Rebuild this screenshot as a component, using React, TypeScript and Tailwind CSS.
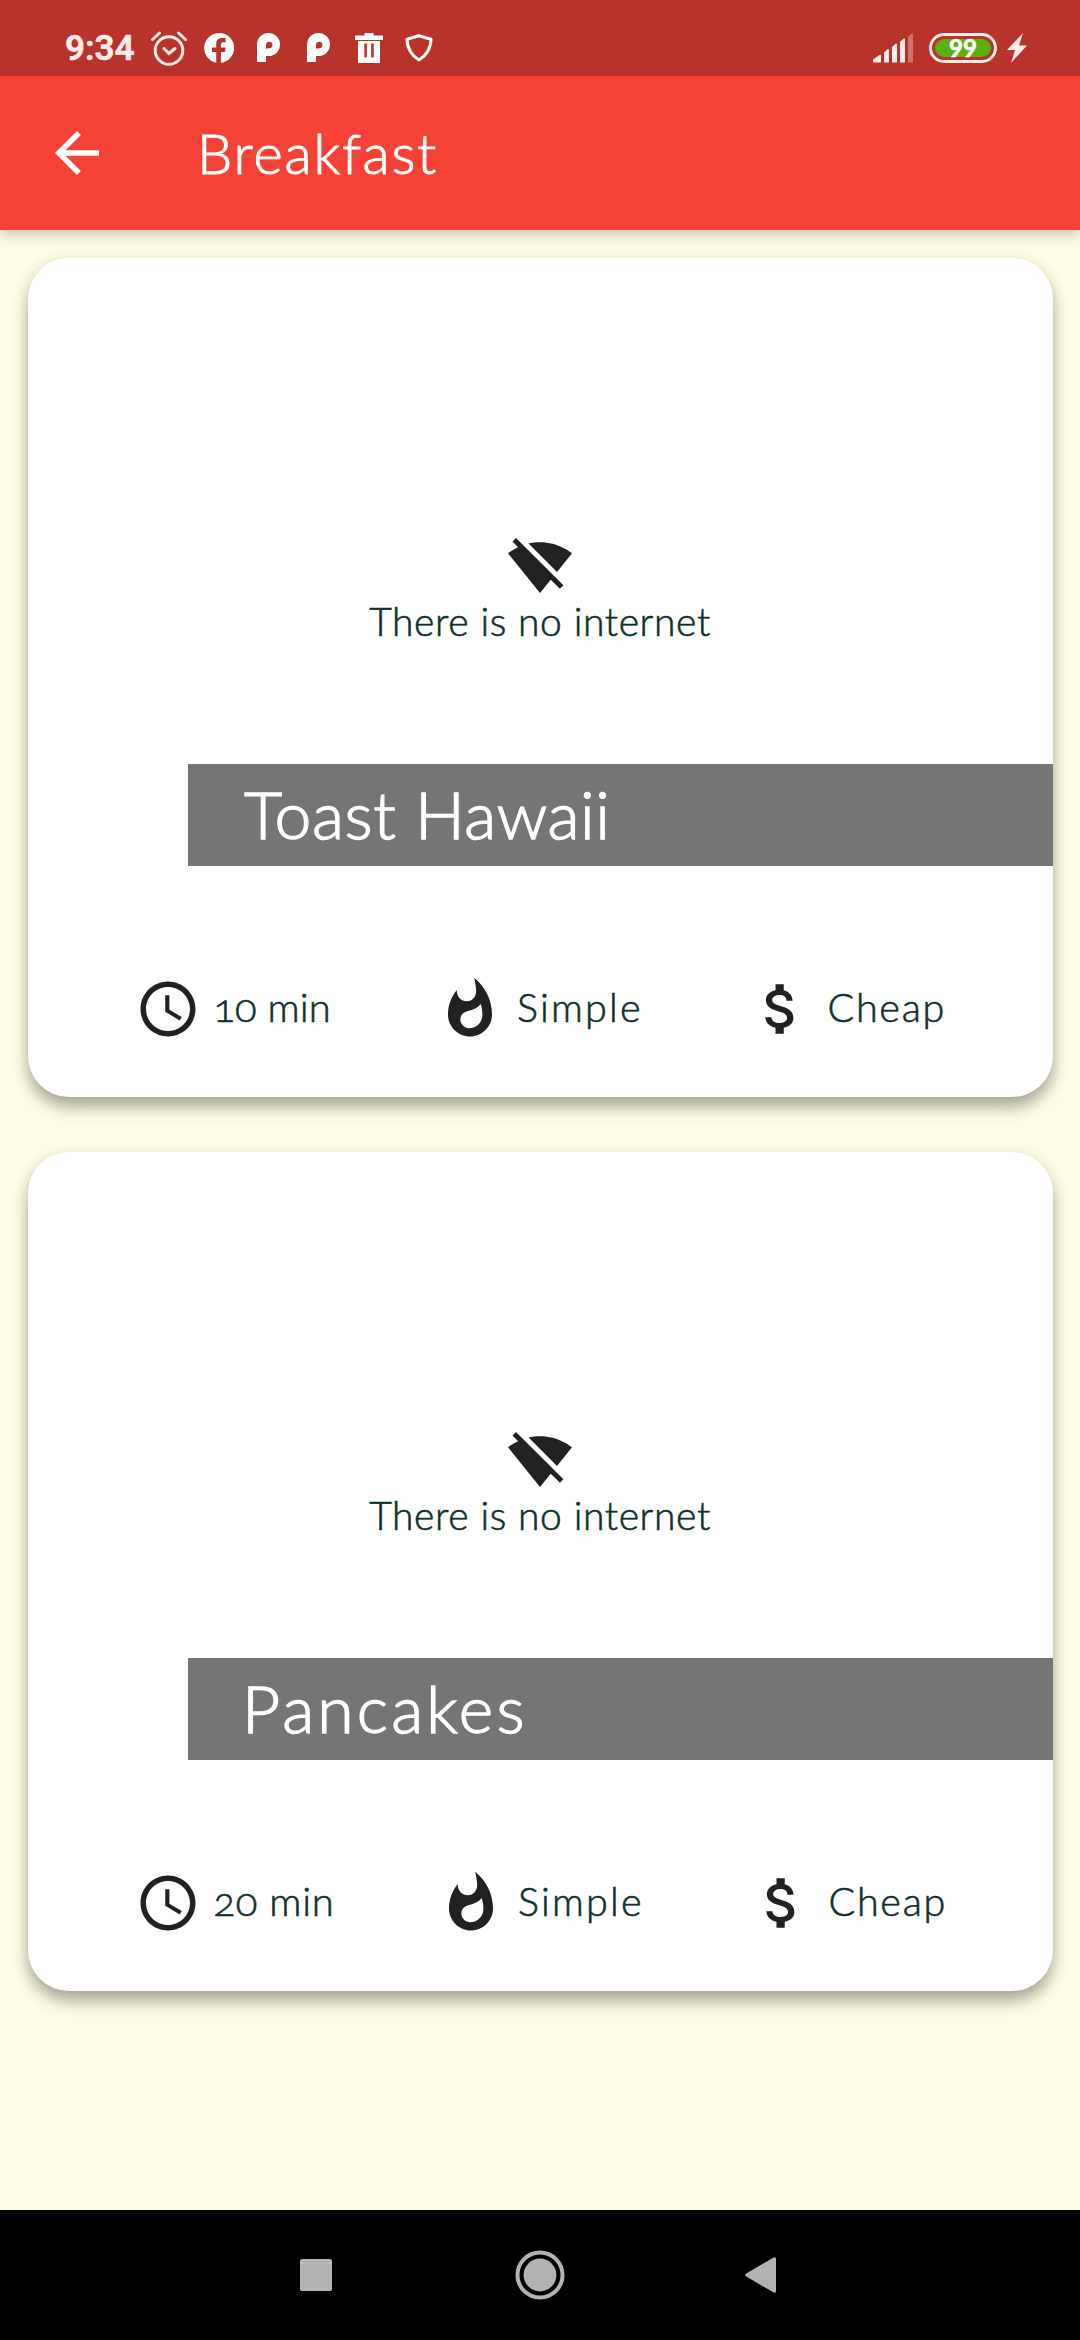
import type { ReactNode } from 'react';

type Recipe = {
  title: string;
  titleClass: string;
  duration: string;
  durationClass: string;
  durationWidth: string;
};

const recipes: Recipe[] = [
  {
    title: 'Toast Hawaii',
    titleClass: 'text-[66px] tracking-[0.6px] pl-[56px]',
    duration: '10 min',
    durationClass: 'tracking-[0px]',
    durationWidth: 'w-[302px]',
  },
  {
    title: 'Pancakes',
    titleClass: 'text-[66px] tracking-[3.2px] pl-[54px]',
    duration: '20 min',
    durationClass: 'tracking-[0.6px]',
    durationWidth: 'w-[303px]',
  },
];

function AlarmIcon() {
  return (
    <svg className="ml-[16px] h-[36px] w-[38px]" viewBox="0 0 38 36" fill="none" stroke="currentColor" strokeWidth="3" strokeLinecap="round">
      <circle cx="19" cy="20.5" r="13.8" />
      <path d="M2.5 9.5 9.5 3M28.500 3l7 6.500M14 18.500l5 5 6-5" />
    </svg>
  );
}

function FacebookIcon() {
  return (
    <svg className="ml-[16px] h-[30px] w-[30px]" viewBox="0 0 30 30" fill="currentColor">
      <path d="M15 0a15 15 0 0 0-2.800 29.700V19H8v-4.600h4.200v-3.200c0-4 2.300-6.200 5.900-6.200h3.600v4.300h-2.400c-1.800 0-2.400 1-2.400 2.300v2.800h4.700L21 19h-4.100v10.900A15 15 0 0 0 15 0z" />
    </svg>
  );
}

function PIcon({ className }: { className: string }) {
  return (
    <svg className={className} viewBox="0 0 23 29" fill="currentColor" fillRule="evenodd">
      <path d="M0 29V11.500a11.500 11.500 0 1 1 11.500 11.500H9v6zM9 17V12a3.200 3.200 0 1 1 3.200 3.200H11.500c-1.500 0-2.500.6-2.500 1.800z" />
    </svg>
  );
}

function TrashIcon() {
  return (
    <svg className="ml-[25px] h-[30px] w-[28px]" viewBox="0 0 28 30" fill="currentColor" fillRule="evenodd">
      <path d="M0 2.500h9.500V0h9v2.500H28V7H0zM3 8h22v22H3zm6.300 2.500v14h2.600v-14zm6.800 0v14h2.600v-14z" />
    </svg>
  );
}

function ShieldIcon() {
  return (
    <svg className="ml-[22px] h-[28px] w-[28px]" viewBox="0 0 28 28" fill="none" stroke="currentColor" strokeWidth="3" strokeLinejoin="round">
      <path d="M14 1.800 26 5.200C26 14 21 22 14 26 7 22 2 14 2 5.200z" />
    </svg>
  );
}

function SignalIcon() {
  return (
    <svg className="h-[30px] w-[41px]" viewBox="0 0 41 30" fill="currentColor">
      <path d="M0 29.500v-3l6.500-4.500q1.500-.5 1.500 1v6.500z" />
      <path d="M11 29.500V19.500l3.500-3.300q1.500-.5 1.500 1v12.300zM19 29.500V14l3.500-3.300q1.500-.5 1.500 1v17.800zM27 29.500V9l3.500-3.300q1.500-.5 1.500 1v22.800z" />
      <path opacity=".35" d="M35 29.500V4l3.500-3.300q1.500-.5 1.500 1v27.800z" />
    </svg>
  );
}

function StatusBar() {
  return (
    <div className="flex h-[76px] items-center bg-[#b8332a] pt-[19px] text-[#ffebe8]">
      <span className="ml-[65px] w-[69px] pt-[2px] font-['Roboto'] text-[35px] font-semibold leading-[36px]">9:34</span>
      <AlarmIcon />
      <div className="flex items-center text-white">
        <FacebookIcon />
        <PIcon className="ml-[23px] h-[29px] w-[23px]" />
        <PIcon className="ml-[27px] h-[29px] w-[23px]" />
        <TrashIcon />
        <ShieldIcon />
      </div>
      <div className="ml-auto mr-[53px] flex items-center">
        <SignalIcon />
        <div className="ml-[15px] h-[30px] w-[68px] rounded-full border-[3px] border-[#ffebe8] p-[3px]">
          <div className="flex h-[18px] items-center justify-center rounded-full bg-[#5bb010] font-['Lato'] text-[24px] font-bold leading-none text-white">99</div>
        </div>
        <svg className="ml-[10px] h-[30px] w-[20px]" viewBox="0 0 20 30" fill="currentColor">
          <path d="M16 0 0 17h8L4 30l16-17.500h-8z" />
        </svg>
      </div>
    </div>
  );
}

function Icon({ children, className = '' }: { children: ReactNode; className?: string }) {
  return (
    <svg className={`h-[66px] w-[66px] shrink-0 fill-[#212121] ${className}`} viewBox="0 0 24 24">
      {children}
    </svg>
  );
}

function RecipeCard({ title, titleClass, duration, durationClass, durationWidth }: Recipe) {
  return (
    <article className="h-[839px] rounded-[41px] bg-white text-[#10302c] shadow-[0_12px_18px_-2px_rgba(0,0,0,0.28),0_4px_16px_rgba(0,0,0,0.16)]">
      <div className="relative flex h-[662px] flex-col items-center justify-center">
        <Icon className="translate-y-px">
          <path d="M23.640 7c-.45-.34-4.930-4-11.640-4-1.500 0-2.890.190-4.150.480L18.180 13.800 23.640 7zm-6.600 8.220L3.270 1.440 2 2.720l2.050 2.060C1.910 5.760.590 6.820.360 7l11.630 14.490.010.010.010-.010 3.900-4.860 3.320 3.320 1.270-1.270-3.460-3.460z" />
        </Icon>
        <p className="pt-[2px] pb-[2px] text-[39px] leading-[41px] tracking-[0.6px]">There is no internet</p>
        <h2 className={`absolute bottom-[54px] right-0 h-[102px] w-[864.5px] bg-[#757575] font-light leading-[99px] text-white [-webkit-text-stroke:1.4px_white] ${titleClass}`}>
          {title}
        </h2>
      </div>
      <div className="flex h-[178px] items-center pl-[107.5px] text-[39.500px] leading-[46px]">
        <div className={`flex items-center ${durationWidth}`}>
          <Icon>
            <path d="M11.990 2C6.470 2 2 6.480 2 12s4.470 10 9.990 10C17.520 22 22 17.520 22 12S17.520 2 11.990 2zM12 20c-4.420 0-8-3.580-8-8s3.580-8 8-8 8 3.580 8 8-3.580 8-8 8zm.5-13H11v6l5.250 3.150.750-1.230-4.500-2.670z" />
          </Icon>
          <span className={`ml-[12.5px] whitespace-nowrap pb-[4px] text-[40px] [font-variant-numeric:oldstyle-nums] ${durationClass}`}>{duration}</span>
        </div>
        <div className="flex w-[311px] items-center">
          <Icon>
            <path d="M13.500.670s.740 2.650.740 4.800c0 2.060-1.350 3.730-3.410 3.730-2.070 0-3.630-1.670-3.630-3.730l.030-.360C5.210 7.510 4 10.620 4 14c0 4.420 3.580 8 8 8s8-3.580 8-8C20 8.610 17.410 3.800 13.500.670zM11.710 19c-1.780 0-3.220-1.400-3.220-3.140 0-1.620 1.050-2.760 2.810-3.120 1.770-.360 3.600-1.210 4.620-2.580.390 1.290.590 2.650.590 4.040 0 2.650-2.150 4.800-4.800 4.800z" />
          </Icon>
          <span className="ml-[14px] pb-[4px] tracking-[2.2px]">Simple</span>
        </div>
        <div className="flex items-center">
          <Icon>
            <path d="M11.800 10.900c-2.270-.590-3-1.200-3-2.150 0-1.090 1.010-1.850 2.700-1.850 1.780 0 2.440.850 2.500 2.100h2.210c-.070-1.720-1.120-3.300-3.210-3.810V3h-3v2.160c-1.940.420-3.500 1.680-3.500 3.610 0 2.310 1.910 3.460 4.700 4.130 2.500.6 3 1.480 3 2.410 0 .690-.490 1.790-2.700 1.790-2.060 0-2.870-.920-2.980-2.100h-2.200c.120 2.190 1.760 3.420 3.680 3.830V21h3v-2.150c1.950-.370 3.500-1.500 3.500-3.550 0-2.840-2.430-3.810-4.700-4.400z" />
          </Icon>
          <span className="ml-[13.500px] pb-[4px] tracking-[1.7px]">Cheap</span>
        </div>
      </div>
    </article>
  );
}

function NavigationBar() {
  return (
    <nav className="flex h-[130px] items-center bg-black text-[#b3b3b3]">
      <div className="ml-[300px] h-[32px] w-[32px] rounded-[2px] bg-[#b3b3b3]" />
      <svg className="ml-[183px] h-[50px] w-[50px]" viewBox="0 0 50 50" fill="currentColor">
        <circle cx="25" cy="25" r="22.500" fill="none" stroke="currentColor" strokeWidth="4" />
        <circle cx="25" cy="25" r="16.400" />
      </svg>
      <svg className="ml-[180px] h-[36px] w-[31px]" viewBox="0 0 31 36" fill="currentColor" stroke="currentColor" strokeWidth="3" strokeLinejoin="round">
        <path d="M29.500 1.700v32.600L1.700 18z" />
      </svg>
    </nav>
  );
}

export default function App() {
  return (
    <div className="flex h-[2340px] w-[1080px] flex-col overflow-hidden bg-[#fffde4] font-['Lato',sans-serif] font-light [-webkit-text-stroke:0.6px]">
      <div className="relative">
        <StatusBar />
        <header className="flex h-[154px] items-center bg-[#f44336] text-white shadow-[0_6px_12px_rgba(0,0,0,0.2)]">
          <svg className="ml-[44px] h-[66px] w-[66px] fill-white" viewBox="0 0 24 24">
            <path d="M20 11H7.830l5.590-5.590L12 4l-8 8 8 8 1.410-1.410L7.830 13H20v-2z" />
          </svg>
          <h1 className="ml-[87px] text-[56px] font-light leading-[66px] tracking-[1.8px] [-webkit-text-stroke:1px]">Breakfast</h1>
        </header>
      </div>
      <main className="flex grow flex-col gap-[55px] px-[27.500px] pt-[27.500px]">
        {recipes.map((recipe) => (
          <RecipeCard key={recipe.title} {...recipe} />
        ))}
      </main>
      <NavigationBar />
    </div>
  );
}
